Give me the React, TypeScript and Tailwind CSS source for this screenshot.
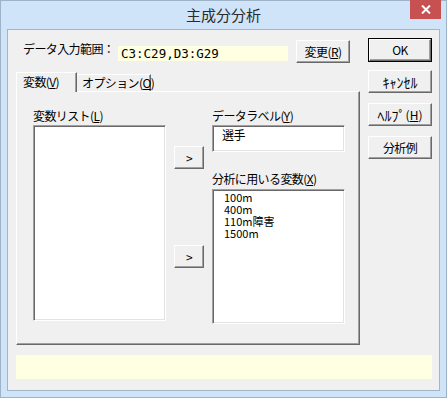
import React from 'react'

const ui = "font-['Noto_Sans_CJK_JP','Noto_Sans',sans-serif]"
const raised = "bg-[#f0f0f0] border border-t-white border-l-white border-r-[#696969] border-b-[#696969] shadow-[inset_-1px_-1px_0_#a0a0a0]"
const sunken = "bg-white border border-t-[#a0a0a0] border-l-[#a0a0a0] border-r-white border-b-white shadow-[inset_1px_1px_0_#696969,inset_-1px_-1px_0_#e3e3e3]"

function Btn({ children, className = '' }: { children: React.ReactNode; className?: string }) {
  return (
    <div className={`${raised} flex items-center justify-center text-[12px] leading-none text-black whitespace-nowrap ${className}`}>
      {children}
    </div>
  )
}

function Key({ k }: { k: string }) {
  return <span className="underline underline-offset-1">{k}</span>
}

export default function App() {
  return (
    <div className={`w-[447px] h-[398px] bg-[#cfe4f8] border border-[#9fb3c8] flex flex-col ${ui}`}>
      {/* title bar */}
      <div className="h-[28px] grid grid-cols-[1fr_auto_1fr]">
        <div />
        <div className="text-[15px] leading-[28px] text-[#2b2b2b]">主成分分析</div>
        <div className="flex justify-end items-start">
          <div className="w-[31px] h-[19px] -mt-px mr-[5px] bg-[#c75050] flex items-center justify-center">
            <svg width="10" height="9" viewBox="0 0 10 9">
              <path d="M1 0.5 L9 8.5 M9 0.5 L1 8.5" stroke="white" strokeWidth="2" />
            </svg>
          </div>
        </div>
      </div>

      {/* client area */}
      <div className="mx-[6px] h-[362px] border border-[#a3b6c9] bg-[#f0f0f0] pl-[8px] pt-[8px] text-black tracking-[-0.6px]">
        <div className="flex">
          {/* left area */}
          <div className="w-[344px]">
            <div className="flex h-[25px]">
              <div className="w-[95px] ml-[7px] mt-[4px] text-[12px] leading-[14px] whitespace-nowrap">データ入力範囲：</div>
              <div className="w-[170px] h-[15px] mt-[8px] bg-[#ffffe1] pl-[3px] font-['DejaVu_Sans_Mono',monospace] text-[12.5px] leading-[15px] tracking-normal">
                C3:C29,D3:G29
              </div>
              <Btn className="ml-[8px] mt-[2px] w-[54px] h-[23px]">
                変更(<Key k="R" />)
              </Btn>
            </div>

            {/* tabs */}
            <div className="flex items-end mt-[9px]">
              <div className="relative z-10 -mb-px w-[61px] h-[20px] bg-[#f0f0f0] border-t border-l border-r border-t-white border-l-white border-r-[#696969] shadow-[inset_-1px_0_0_#a0a0a0] pl-[6px] text-[12px] leading-[18px] whitespace-nowrap">
                変数(<Key k="V" />)
              </div>
              <div className="w-[74px] h-[17px] border-t border-r border-t-white border-r-[#696969] shadow-[inset_-1px_0_0_#a0a0a0] pl-[5px] text-[12px] leading-[16px] whitespace-nowrap">
                オプション(<Key k="O" />)
              </div>
            </div>

            {/* tab panel */}
            <div className="h-[254px] border border-t-white border-l-white border-r-[#696969] border-b-[#696969] shadow-[inset_-1px_-1px_0_#a0a0a0] flex pl-[16px] pt-[16px]">
              <div className="w-[133px]">
                <div className="h-[16px] text-[12px] leading-[16px] whitespace-nowrap">変数リスト(<Key k="L" />)</div>
                <div className={`${sunken} mt-[1px] h-[196px]`} />
              </div>
              <div className="ml-[8px] w-[30px] flex flex-col">
                <Btn className="mt-[38px] h-[23px]">&gt;</Btn>
                <Btn className="mt-[76px] h-[23px]">&gt;</Btn>
              </div>
              <div className="ml-[8px] w-[133px]">
                <div className="h-[16px] text-[12px] leading-[16px] whitespace-nowrap">データラベル(<Key k="Y" />)</div>
                <div className={`${sunken} mt-[1px] h-[27px] pl-[9px] pt-[2px] text-[12px] leading-[14px]`}>選手</div>
                <div className="mt-[19px] h-[16px] text-[12px] leading-[16px] whitespace-nowrap">分析に用いる変数(<Key k="X" />)</div>
                <div className={`${sunken} mt-[2px] h-[135px] pl-[11px] pt-[1px] text-[11px] leading-[12px] tracking-normal`}>
                  <div>100m</div>
                  <div>400m</div>
                  <div>110m障害</div>
                  <div>1500m</div>
                </div>
              </div>
            </div>
          </div>

          {/* right buttons */}
          <div className="ml-[8px] w-[64px] flex flex-col">
            <div className="h-[24px] border border-black">
              <Btn className="h-full">OK</Btn>
            </div>
            <Btn className="mt-[8px] h-[23px] text-[14px] tracking-normal">ｷｬﾝｾﾙ</Btn>
            <Btn className="mt-[10px] h-[23px] text-[14px] tracking-normal">
              ﾍﾙﾌﾟ<span className="text-[12px]">(<Key k="H" />)</span>
            </Btn>
            <Btn className="mt-[10px] h-[23px]">分析例</Btn>
          </div>
        </div>

        {/* status bar */}
        <div className="mt-[10px] w-[416px] h-[24px] bg-[#ffffe1]" />
      </div>
    </div>
  )
}
